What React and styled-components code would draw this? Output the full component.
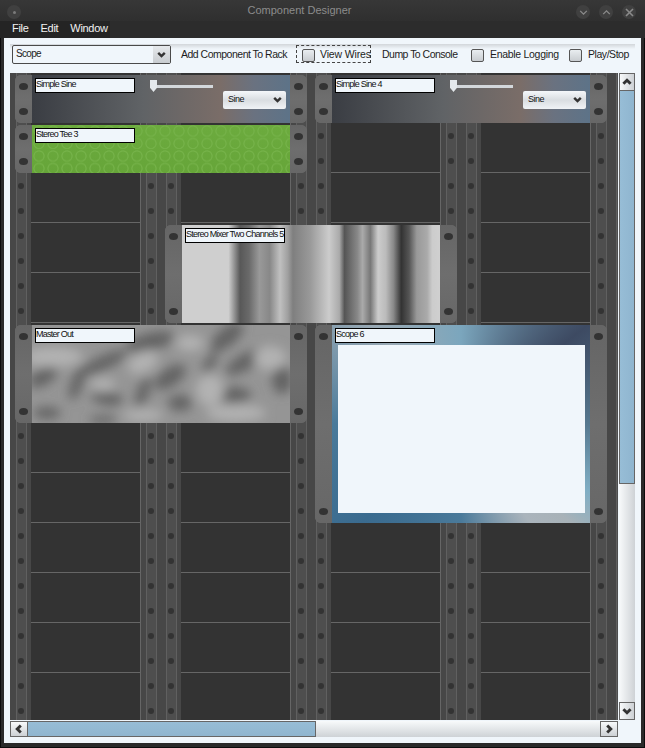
import React from 'react';
import styled, { createGlobalStyle } from 'styled-components';

const GlobalStyle = createGlobalStyle`
  html, body {
    margin: 0;
    padding: 0;
    background: #1c1c1c;
  }
  body {
    font-family: "Liberation Sans", Arial, sans-serif;
  }
`;

const COLS = [1, 2, 3, 4, 5];
const ROWS = [1, 2, 3, 4, 5, 6, 7, 8, 9, 10, 11, 12, 13];

const BLOBS = [
  { x: 11, y: 52, rx: 16, ry: 8, rot: -30, dark: true },
  { x: 71, y: 38, rx: 26, ry: 7, rot: -25, dark: true },
  { x: 75, y: 73, rx: 16, ry: 7, rot: 10, dark: true },
  { x: 45, y: 58, rx: 6, ry: 18, rot: 20, dark: true },
  { x: 118, y: 17, rx: 25, ry: 9, rot: -15, dark: true },
  { x: 138, y: 52, rx: 18, ry: 9, rot: -35, dark: true },
  { x: 195, y: 12, rx: 20, ry: 9, rot: -40, dark: true },
  { x: 213, y: 37, rx: 22, ry: 8, rot: -30, dark: true },
  { x: 250, y: 55, rx: 10, ry: 14, rot: 0, dark: true },
  { x: 201, y: 70, rx: 18, ry: 8, rot: 0, dark: true },
  { x: 148, y: 78, rx: 12, ry: 8, rot: 0, dark: true },
  { x: 111, y: 67, rx: 6, ry: 16, rot: 20, dark: true },
  { x: 15, y: 88, rx: 14, ry: 6, rot: 0, dark: true },
  { x: 71, y: 95, rx: 14, ry: 4, rot: 0, dark: true },
  { x: 178, y: 38, rx: 5, ry: 12, rot: 30, dark: true },
  { x: 111, y: 37, rx: 16, ry: 10, rot: -30 },
  { x: 21, y: 32, rx: 30, ry: 10, rot: 0 },
  { x: 71, y: 60, rx: 12, ry: 7, rot: 0 },
  { x: 178, y: 65, rx: 14, ry: 16, rot: 0 },
  { x: 238, y: 33, rx: 16, ry: 12, rot: 0 },
  { x: 111, y: 90, rx: 20, ry: 6, rot: 0 },
  { x: 204, y: 88, rx: 30, ry: 8, rot: 0 },
  { x: 158, y: 18, rx: 14, ry: 8, rot: 0 },
];

function Chevron({ dir = 'down', size = 10, weight = 2.2, color = '#333' }) {
  const paths = {
    down: 'M2 3.5 L5 6.5 L8 3.5',
    up: 'M2 6.5 L5 3.5 L8 6.5',
    left: 'M6.5 2 L3.5 5 L6.5 8',
    right: 'M3.5 2 L6.5 5 L3.5 8',
  };
  return (
    <svg width={size} height={size} viewBox="0 0 10 10" fill="none">
      <path d={paths[dir]} stroke={color} strokeWidth={weight} />
    </svg>
  );
}

function Sine() {
  return (
    <>
      <Slider>
        <SliderThumb />
        <SliderTrack />
      </Slider>
      <ModuleSelect>
        <span>Sine</span>
        <Chevron size={11} />
      </ModuleSelect>
    </>
  );
}

function Module({ col, row, span, name, kind, children }) {
  return (
    <ModuleBox $col={col} $row={row} $span={span}>
      <Ear><EarScrew /><EarScrew /></Ear>
      <Panel $kind={kind}>
        {kind === 'noise' && (
          <NoiseArt width="258" height="98" viewBox="0 0 258 98">
            <defs>
              <filter id="soft" x="-30%" y="-30%" width="160%" height="160%">
                <feGaussianBlur stdDeviation="5.5" />
              </filter>
            </defs>
            <g filter="url(#soft)">
              {BLOBS.map((b, i) => (
                <ellipse
                  key={i}
                  cx={b.x}
                  cy={b.y}
                  rx={b.rx}
                  ry={b.ry}
                  fill={b.dark ? '#636363' : '#b2b2b2'}
                  transform={`rotate(${b.rot} ${b.x} ${b.y})`}
                />
              ))}
            </g>
          </NoiseArt>
        )}
        <NameLabel>{name}</NameLabel>
        {children}
      </Panel>
      <Ear><EarScrew /><EarScrew /></Ear>
    </ModuleBox>
  );
}

export default function App() {
  return (
    <Frame>
      <GlobalStyle />
      <TitleBar>
        <RoundButton><MenuDot /></RoundButton>
        <Title>Component Designer</Title>
        <WindowButtons>
          <RoundButton><Chevron size={11} weight={1.2} color="#8a8a8a" /></RoundButton>
          <RoundButton><Chevron dir="up" size={11} weight={1.2} color="#8a8a8a" /></RoundButton>
          <RoundButton>
            <svg width="11" height="11" viewBox="0 0 11 11" fill="none">
              <path d="M2 2 L9 9 M9 2 L2 9" stroke="#8a8a8a" strokeWidth="1.6" />
            </svg>
          </RoundButton>
        </WindowButtons>
      </TitleBar>

      <MenuBar>
        <MenuGroup>
          <MenuItem>File</MenuItem>
          <MenuItem>Edit</MenuItem>
          <MenuItem>Window</MenuItem>
        </MenuGroup>
      </MenuBar>

      <Content>
        <Toolbar>
          <Combo>
            <ComboText>Scope</ComboText>
            <ComboArrow><Chevron size={11} /></ComboArrow>
          </Combo>
          <ToolText $left={10} $width={115} $track={-0.5}>Add Component To Rack</ToolText>
          <FocusToggle>
            <CheckBox />
            <span>View Wires</span>
          </FocusToggle>
          <ToolText $left={11} $width={76} $track={-0.52}>Dump To Console</ToolText>
          <CheckBox $left={13} />
          <ToolText $left={6} $width={68} $track={-0.3}>Enable Logging</ToolText>
          <CheckBox $left={11} />
          <ToolText $left={6} $width={42} $track={-0.45}>Play/Stop</ToolText>
        </Toolbar>

        <MainRow>
          <Viewport>
            <Rack>
              {ROWS.map((row) =>
                COLS.map((col) => (
                  <RackCell key={`${row}-${col}`} $col={col} $row={row}>
                    <Rail>
                      <RailBar><RailScrew /><RailScrew /></RailBar>
                    </Rail>
                    <Bay />
                    <Rail>
                      <RailBar><RailScrew /><RailScrew /></RailBar>
                    </Rail>
                  </RackCell>
                ))
              )}
              <Module col={1} row={1} span={1} name="Simple Sine" kind="sine"><Sine /></Module>
              <Module col={3} row={1} span={1} name="Simple Sine 4" kind="sine"><Sine /></Module>
              <Module col={1} row={2} span={1} name="Stereo Tee 3" kind="green" />
              <Module col={2} row={4} span={2} name="Stereo Mixer Two Channels 5" kind="mixer" />
              <Module col={1} row={6} span={2} name="Master Out" kind="noise" />
              <Module col={3} row={6} span={4} name="Scope 6" kind="scope">
                <ScopeScreen />
              </Module>
            </Rack>

            <HScroll>
              <ScrollButton $h><Chevron dir="left" size={12} weight={2.4} /></ScrollButton>
              <HThumb />
              <HTrack />
              <ScrollButton $h><Chevron dir="right" size={12} weight={2.4} /></ScrollButton>
            </HScroll>
          </Viewport>

          <VScroll>
            <ScrollButton><Chevron dir="up" size={12} weight={2.4} /></ScrollButton>
            <VThumb />
            <VTrack />
            <ScrollButton $end><Chevron size={12} weight={2.4} /></ScrollButton>
          </VScroll>
        </MainRow>
      </Content>
    </Frame>
  );
}

const Frame = styled.div`
  width: 645px;
  height: 748px;
  box-sizing: border-box;
  display: flex;
  flex-direction: column;
  overflow: hidden;
  background: #2a2a2a;
  box-shadow: inset 1px 0 0 #0c0c0c, inset -1px 0 0 #0c0c0c, inset 0 -1px 0 #0c0c0c, inset 0 1px 0 #141414;
`;

const TitleBar = styled.div`
  height: 21px;
  flex: none;
  display: flex;
  align-items: center;
  justify-content: space-between;
  padding: 3px 9px 0 7px;
  box-sizing: border-box;
  position: relative;
  background: linear-gradient(#373737, #2f2f2f);
`;

const Title = styled.div`
  position: absolute;
  left: 0;
  right: 46px;
  top: 4px;
  text-align: center;
  font-size: 11px;
  line-height: 13px;
  color: #8c8c8c;
`;

const WindowButtons = styled.div`
  display: flex;
  gap: 9px;
`;

const RoundButton = styled.div`
  width: 14px;
  height: 14px;
  border-radius: 50%;
  background: #404040;
  display: flex;
  align-items: center;
  justify-content: center;
`;

const MenuDot = styled.div`
  width: 3px;
  height: 3px;
  border-radius: 50%;
  background: #7a7a7a;
`;

const MenuBar = styled.div`
  height: 17px;
  flex: none;
  background: #2c2c2c;
`;

const MenuGroup = styled.div`
  width: 110px;
  height: 17px;
  display: flex;
  background: #242424;
`;

const MenuItem = styled.div`
  margin-left: 12px;
  font-size: 11px;
  line-height: 15px;
  letter-spacing: -0.3px;
  color: #f2f2f2;
`;

const Content = styled.div`
  width: 637px;
  height: 705px;
  margin-left: 4px;
  padding: 6px 0 0 6px;
  box-sizing: border-box;
  background: #f0f6fb;
  color: #1d1d1d;
`;

const Toolbar = styled.div`
  width: 625px;
  height: 29px;
  box-sizing: border-box;
  padding: 1px 0 0 2px;
  display: flex;
  align-items: flex-start;
  font-size: 10.5px;
  background: linear-gradient(#d2d6da, #f0f6fb 5px);
`;

const Combo = styled.div`
  width: 159px;
  height: 19px;
  box-sizing: border-box;
  display: flex;
  justify-content: space-between;
  border: 1px solid #4a4a4a;
  border-radius: 2px;
  background: #f0f6fb;
`;

const ComboText = styled.span`
  padding-left: 3px;
  font-size: 10px;
  line-height: 16px;
  letter-spacing: -0.7px;
`;

const ComboArrow = styled.div`
  width: 17px;
  display: flex;
  align-items: center;
  justify-content: center;
  background: linear-gradient(#e6e9ec, #c8ccd0);
`;

const ToolText = styled.div`
  width: ${(p) => p.$width}px;
  margin-left: ${(p) => p.$left}px;
  flex: none;
  line-height: 18px;
  letter-spacing: ${(p) => p.$track}px;
  white-space: nowrap;
`;

const CheckBox = styled.div`
  width: 13px;
  height: 13px;
  flex: none;
  box-sizing: border-box;
  margin: 4px 0 0 ${(p) => p.$left || 0}px;
  border: 1px solid #555;
  border-radius: 2px;
  background: linear-gradient(#e9edf0, #c9cdd1);
`;

const FocusToggle = styled.div`
  width: 75px;
  height: 18px;
  flex: none;
  box-sizing: border-box;
  display: flex;
  gap: 5px;
  padding-left: 5px;
  line-height: 17px;
  letter-spacing: -0.15px;
  white-space: nowrap;
  border: 1px dashed #444;
  ${CheckBox} {
    margin-top: 3px;
  }
`;

const MainRow = styled.div`
  display: flex;
  gap: 1px;
`;

const Viewport = styled.div`
  width: 608px;
  flex: none;
`;

const Rack = styled.div`
  height: 647px;
  box-sizing: border-box;
  padding-left: 1px;
  overflow: hidden;
  display: grid;
  grid-template-columns: repeat(5, 150px);
  grid-auto-rows: 50px;
  background: #474747;
`;

const RackCell = styled.div`
  grid-column: ${(p) => p.$col};
  grid-row: ${(p) => p.$row};
  display: flex;
`;

const Rail = styled.div`
  width: 20px;
  flex: none;
  display: flex;
  justify-content: center;
  background: #474747;
`;

const RailBar = styled.div`
  width: 11px;
  box-sizing: border-box;
  display: flex;
  flex-direction: column;
  align-items: center;
  gap: 19px;
  padding-top: 10px;
  border-left: 1px solid #606060;
  border-right: 1px solid #606060;
  background: #4e4e4e;
`;

const RailScrew = styled.div`
  width: 6px;
  height: 6px;
  flex: none;
  border-radius: 50%;
  background: #333;
`;

const Bay = styled.div`
  width: 110px;
  flex: none;
  box-sizing: border-box;
  background: #333;
  border-bottom: 1px solid #666;
  border-right: 1px solid #666;
`;

const ModuleBox = styled.div`
  grid-column: ${(p) => p.$col} / span 2;
  grid-row: ${(p) => p.$row} / span ${(p) => p.$span};
  z-index: 1;
  width: 292px;
  height: ${(p) => p.$span * 50 - 2}px;
  margin: 2px 0 0 4px;
  display: flex;
  border-radius: 6px;
  overflow: hidden;
  background: #696969;
`;

const Ear = styled.div`
  width: 17px;
  flex: none;
  box-sizing: border-box;
  display: flex;
  flex-direction: column;
  align-items: center;
  justify-content: space-between;
  padding: 8px 0;
  background: linear-gradient(#656565, #6e6e6e 50%, #676767);
`;

const EarScrew = styled.div`
  width: 9px;
  height: 7px;
  border-radius: 50%;
  background: #333;
`;

const panelBackgrounds = {
  sine: `linear-gradient(90deg, #3a3d43 0%, #606366 43%, #7a6d68 73%, #6a7280 86%, #5d7388 100%)`,
  green: `
    radial-gradient(circle at 7px 6px, transparent 4.2px, #75b249 4.8px, #75b249 5.3px, transparent 6px) 0 0 / 14px 12.5px,
    linear-gradient(#6cab3e, #66a539)
  `,
  mixer: `linear-gradient(90deg, #cfcfcf 0%, #cfcfcf 18%, #585858 22.5%, #6a6a6a 26%, #999 30%, #888 34%, #c0c0c0 38%, #a0a0a0 41%, #7f7f7f 43%, #999 49.6%, #ccc 57%, #aaa 61%, #555 63%, #888 68%, #aaa 70%, #777 73%, #ccc 76%, #bbb 79%, #888 82%, #333 85%, #555 88%, #999 91%, #aaa 95%, #ccc 97%, #d0d0d0 100%)`,
  noise: `#959595`,
  scope: `conic-gradient(from 0deg at 50% 50%, #7ba6bd 0deg, #3d4a62 52deg, #56788f 90deg, #80aec4 118deg, #a8b2b8 132deg, #aab4bc 145deg, #4a7a9a 180deg, #3a6b8f 225deg, #4a7a9a 270deg, #9aaab5 318deg, #7ba6bd 360deg)`,
};

const Panel = styled.div`
  width: 258px;
  flex: none;
  box-sizing: border-box;
  position: relative;
  overflow: hidden;
  display: flex;
  flex-wrap: wrap;
  align-items: flex-start;
  align-content: flex-start;
  padding: 3px;
  background: ${(p) => panelBackgrounds[p.$kind]};
`;

const NoiseArt = styled.svg`
  position: absolute;
  left: 0;
  top: 0;
`;

const NameLabel = styled.div`
  width: 100px;
  height: 15px;
  flex: none;
  box-sizing: border-box;
  position: relative;
  border: 1px solid #000;
  background: #f0f6fb;
  color: #111;
  font-size: 9px;
  line-height: 10px;
  letter-spacing: -0.76px;
  white-space: nowrap;
  overflow: hidden;
`;

const Slider = styled.div`
  width: 63px;
  height: 12px;
  margin: 2px 0 0 15px;
  display: flex;
  align-items: center;
`;

const SliderThumb = styled.div`
  width: 7px;
  height: 12px;
  flex: none;
  background: #e4e8ec;
  clip-path: polygon(0 0, 100% 0, 100% 65%, 50% 100%, 0 65%);
`;

const SliderTrack = styled.div`
  flex: 1;
  height: 3px;
  background: #d3d7db;
`;

const ModuleSelect = styled.div`
  width: 63px;
  height: 18px;
  margin: 13px 0 0 10px;
  padding: 0 3px 2px 5px;
  box-sizing: border-box;
  display: flex;
  align-items: center;
  justify-content: space-between;
  border-radius: 2px;
  font-size: 9px;
  letter-spacing: -0.5px;
  color: #111;
  background: linear-gradient(#f4f7fa, #d9dde1 50%, #f0f3f6);
`;

const ScopeScreen = styled.div`
  width: 247px;
  height: 168px;
  margin: 2px 0 0 3px;
  background: #f0f6fb;
`;

const ScrollButton = styled.div`
  flex: none;
  box-sizing: border-box;
  display: flex;
  align-items: center;
  justify-content: center;
  width: ${(p) => (p.$h ? 18 : 16)}px;
  height: ${(p) => (p.$h ? 16 : 18)}px;
  border: 1px solid #666;
  background: ${(p) => (p.$h ? 'linear-gradient(#f8fafb, #cdd1d5)' : 'linear-gradient(90deg, #f8fafb, #cdd1d5)')};
`;

const HScroll = styled.div`
  margin-top: 1px;
  height: 16px;
  display: flex;
`;

const HThumb = styled.div`
  width: 288px;
  box-sizing: border-box;
  border-top: 1px solid #666;
  border-bottom: 1px solid #666;
  border-right: 1px solid #666;
  background: linear-gradient(#97bdd6, #8fb5cf);
`;

const HTrack = styled.div`
  flex: 1;
  background: linear-gradient(#f8fafb, #ced2d6);
`;

const VScroll = styled.div`
  width: 16px;
  height: 647px;
  flex: none;
  display: flex;
  flex-direction: column;
`;

const VThumb = styled.div`
  height: 393px;
  box-sizing: border-box;
  border-left: 1px solid #666;
  border-right: 1px solid #666;
  border-bottom: 1px solid #666;
  background: linear-gradient(90deg, #97bdd6, #8fb5cf);
`;

const VTrack = styled.div`
  flex: 1;
  background: linear-gradient(90deg, #f8fafb, #ced2d6);
`;
